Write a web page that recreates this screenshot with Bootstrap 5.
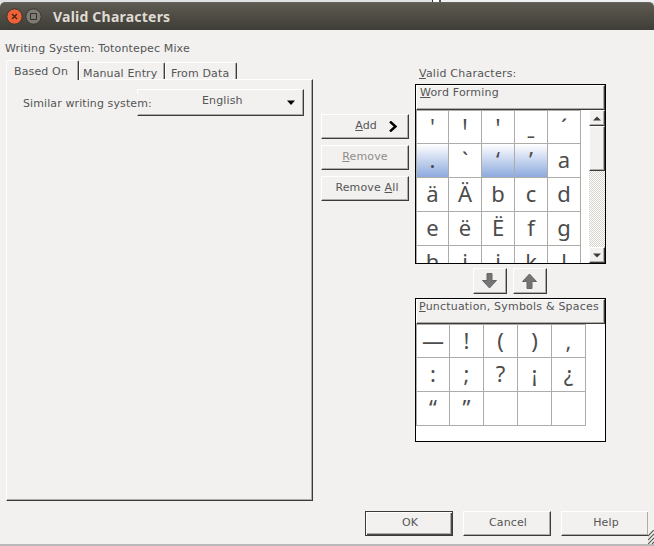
<!DOCTYPE html>
<html lang="en">
<head>
<meta charset="utf-8">
<title>Valid Characters</title>
<link rel="stylesheet" href="https://cdn.jsdelivr.net/npm/bootstrap@5.3.0/dist/css/bootstrap.min.css">
<style>
:root{--face:#f2f1f0;--dark:#3c3b37;--shade:#aeaca8;--ink:#555}
html,body{height:546px;overflow:hidden}
body{font:11px/14px "DejaVu Sans",sans-serif;color:var(--ink);background:#e4e6e8;letter-spacing:.14px}
.backdrop{height:2px;background:linear-gradient(90deg,#333 0 1px,#fff 1px 7px,#555 7px 9px,#eef0f3 9px) 432px 0/222px 2px no-repeat,#dfe1e4}
.titlebar{height:28px;background:linear-gradient(#5d5a50,#3e3d38);border-top:1px solid #67655b;border-radius:5px 5px 0 0;padding-left:6px;gap:2px}
.titlebar h1{font:bold 14px/26px "Noto Sans",sans-serif;color:#dfdbd2;margin:0 0 0 9px;letter-spacing:.22px}
.surface{height:514px;background:var(--face)}
.edge{height:2px;background:#b9b9b9}
u{text-decoration-thickness:1px;text-underline-offset:1px}
.raised{background:var(--face);border:1px solid;border-color:#fff var(--dark) var(--dark) #fff;box-shadow:inset -1px -1px var(--shade);border-radius:0;color:var(--ink);font:inherit;letter-spacing:inherit;padding:0}
.caption-row{height:30px;padding:12px 0 0 5px}
.body-row{height:442px}
.left-col{width:315px;padding-left:6px}
.tabs{height:19px}
.tab-item{height:17px;border:1px solid;border-color:#fff var(--dark) transparent #fff;border-bottom:0;border-radius:3px 2px 0 0;box-shadow:inset -1px 0 var(--shade);padding:4px 0 0 3px;white-space:nowrap}
.tab-manual{width:86px}
.tab-data{width:72px;padding-left:5px}
.tab-item.current{height:20px;width:73px;padding:4px 0 0 7px;background:var(--face);z-index:1}
.panel{width:307px;height:422px;padding:9px 0 0 16px}
.similar{background:var(--face);margin-top:5px;height:20px;line-height:20px;z-index:1;width:130px;margin-right:-16px;white-space:nowrap;letter-spacing:.1px}
.combo{width:167px;height:27px}
.combo span{padding:4px 0 0 64px}
.combo svg{margin-top:10px}
.mid-col{width:88px;margin:54px 6px 0 6px;gap:6px}
.mid-col .raised{height:25px;padding-bottom:2px}
.mid-col .faded{color:#8e8c89}
.right-col{width:191px;padding-top:6px}
.box-label{padding:1px 0 0 4px;height:18px;letter-spacing:.22px}
.charbox{border:1px solid #000;background:#fff;overflow:hidden}
.forming{height:180px}
.symbols{height:144px}
.charhead{height:25px;padding:0 0 0 3px;white-space:nowrap;letter-spacing:.2px}
.symbols .charhead{padding-left:2px}
.glyphs{display:grid;border:solid #aeaca8;border-width:1px 0 0 1px;font:22px/31px "Noto Sans",sans-serif;letter-spacing:0;color:#4c4c4c}
.glyphs span{border:solid #aeaca8;border-width:0 1px 1px 0;text-align:center;overflow:hidden}
.glyphs .on{background:linear-gradient(#fff,#8caade)}
.g1{grid-template-columns:32px repeat(4,33px);grid-template-rows:33px repeat(4,34px)}
.g2{grid-template-columns:33px repeat(4,34px);grid-template-rows:33px 34px 34px}
.scroller{width:16px;height:153px;background:repeating-conic-gradient(#d6d2cc 0 25%,#fff 0 50%) 0 0/2px 2px}
.scroller .arrow{height:16px}
.scroller .thumb{height:45px}
.movers{gap:6px;height:34px;padding:4px 0 0 58px}
.movers .raised{width:34px;height:26px}
.footer-row{height:42px;padding:9px 0 0 365px;gap:10px}
.footer-row .raised{width:88px;height:25px;padding:0 0 2px 2px;flex:none}
.footer-row .default{border-color:var(--dark);box-shadow:inset 1px 1px #fff,inset -1px -1px #4a4945,inset -2px -2px var(--shade)}
.footer-row .clipped{border-right-color:var(--face)}
.grip{margin:19px 0 0 -11px}
</style>
</head>
<body>
<div class="backdrop"></div>
<header class="titlebar d-flex align-items-center">
<svg width="17" height="17" viewBox="0 0 17 17"><circle cx="8.500" cy="8.500" r="7.700" fill="#ee6238" stroke="#35342f"/><path d="M6 6l5 5M11 6l-5 5" stroke="#45200f" stroke-width="1.300"/></svg>
<svg width="17" height="17" viewBox="0 0 17 17"><circle cx="8.500" cy="8.500" r="7.700" fill="#7d7b73" stroke="#35342f"/><path d="M5.500 5.500h6v6h-6z" fill="none" stroke="#33322d"/></svg>
<h1>Valid Characters</h1>
</header>
<main class="surface">
<div class="caption-row">Writing System: Totontepec Mixe</div>
<div class="body-row d-flex">
<section class="left-col">
<div class="tabs d-flex align-items-end">
<div class="tab-item current position-relative align-self-start">Based On</div>
<div class="tab-item tab-manual">Manual Entry</div>
<div class="tab-item tab-data">From Data</div>
</div>
<div class="panel raised d-flex align-items-start">
<label class="similar position-relative">Similar writing system:</label>
<div class="combo raised d-flex justify-content-between"><span>English</span><svg width="8" height="6" class="me-2"><path d="M0 .5h8L4 5z" fill="#000"/></svg></div>
</div>
</section>
<div class="mid-col d-flex flex-column">
<button class="raised d-flex align-items-center justify-content-end"><span><u>A</u>dd</span><svg width="9" height="11" style="margin:1px 10px 0 12px"><path d="M1 0.500l5.500 5-5.500 5" fill="none" stroke="#000" stroke-width="2.400"/></svg></button>
<button class="raised faded"><u>R</u>emove</button>
<button class="raised ps-1">Remove <u>A</u>ll</button>
</div>
<section class="right-col">
<div class="box-label"><u>V</u>alid Characters:</div>
<div class="charbox forming">
<div class="charhead raised"><u>W</u>ord Forming</div>
<div class="d-flex justify-content-between">
<div class="glyphs g1"><span>'</span><span>Ꞌ</span><span>ꞌ</span><span>ˍ</span><span>ˊ</span><span class="on">.</span><span>`</span><span class="on">‘</span><span class="on">’</span><span>a</span><span>ä</span><span>Ä</span><span>b</span><span>c</span><span>d</span><span>e</span><span>ë</span><span>Ë</span><span>f</span><span>g</span><span>h</span><span>i</span><span>j</span><span>k</span><span>l</span></div>
<div class="scroller d-flex flex-column">
<div class="arrow raised d-flex align-items-center justify-content-center"><svg width="8" height="5"><path d="M0 4.500L4 .5l4 4z" fill="#3c3b37"/></svg></div>
<div class="thumb raised"></div>
<div class="arrow raised mt-auto d-flex align-items-center justify-content-center"><svg width="8" height="5"><path d="M0 .5L4 4.500l4-4z" fill="#3c3b37"/></svg></div>
</div>
</div>
</div>
<div class="movers d-flex">
<button class="raised"><svg class="d-block mx-auto" width="18" height="16"><path d="M6 .5h5v7h4.500L8.500 15 1.500 7.500H6z" fill="#747474" stroke="#666"/></svg></button>
<button class="raised"><svg class="d-block mx-auto" width="18" height="16"><path d="M6 15.500h5v-7h4.500L8.500 1 1.500 8.500H6z" fill="#747474" stroke="#666"/></svg></button>
</div>
<div class="charbox symbols">
<div class="charhead raised"><u>P</u>unctuation, Symbols &amp; Spaces</div>
<div class="d-flex"><div class="glyphs g2"><span>—</span><span>!</span><span>(</span><span>)</span><span>,</span><span>:</span><span>;</span><span>?</span><span>¡</span><span>¿</span><span>“</span><span>”</span><span></span><span></span><span></span></div></div>
</div>
</section>
</div>
<footer class="footer-row d-flex">
<button class="raised default">OK</button>
<button class="raised">Cancel</button>
<button class="raised clipped">Help</button>
<svg class="grip flex-shrink-0" width="7" height="14"><path d="M0 6L7-1M0 10l7-7M0 14l7-7M4 14l3-3" stroke="#55544f" stroke-width="1.200"/></svg>
</footer>
</main>
<div class="edge"></div>
<script src="https://cdn.jsdelivr.net/npm/bootstrap@5.3.0/dist/js/bootstrap.bundle.min.js"></script>
</body>
</html>
